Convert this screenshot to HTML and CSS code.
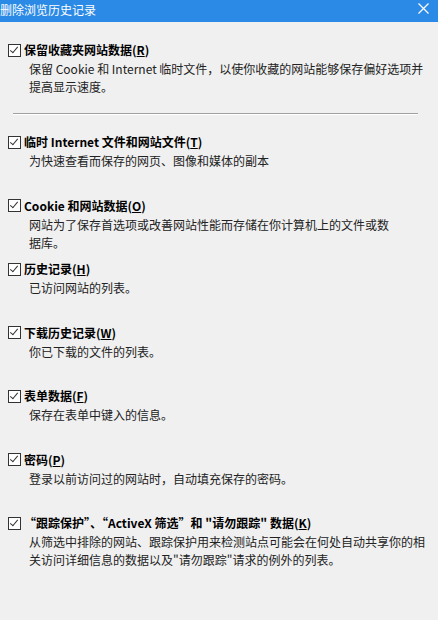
FILE: index.html
```html
<!DOCTYPE html>
<html lang="zh-CN">
  <head>
    <meta charset="UTF-8" />
    <meta name="viewport" content="width=device-width, initial-scale=1.0" />
    <title>删除浏览历史记录</title>
    <link rel="stylesheet" href="styles.css">
  </head>
  <body>
    <div class="titlebar">
      <span class="title">删除浏览历史记录</span>
      <span class="close">
        <svg width="11" height="11" viewBox="0 0 11 11">
          <path d="M0.5 0.5 L10.5 10.5 M10.5 0.5 L0.5 10.5" stroke="#fff" stroke-width="1.2" fill="none" />
        </svg>
      </span>
    </div>
    <div class="panel">
      <div class="item first">
        <label class="row"><span class="box"></span><span class="label">保留收藏夹网站数据(<u>R</u>)</span></label>
        <p class="desc">保留 Cookie 和 Internet 临时文件，以使你收藏的网站能够保存偏好选项并<br>提高显示速度。</p>
      </div>
      <div class="sep"></div>
      <div class="item">
        <label class="row"><span class="box"></span><span class="label">临时 Internet 文件和网站文件(<u>T</u>)</span></label>
        <p class="desc">为快速查看而保存的网页、图像和媒体的副本</p>
      </div>
      <div class="item">
        <label class="row"><span class="box"></span><span class="label">Cookie 和网站数据(<u>O</u>)</span></label>
        <p class="desc">网站为了保存首选项或改善网站性能而存储在你计算机上的文件或数<br>据库。</p>
      </div>
      <div class="item">
        <label class="row"><span class="box"></span><span class="label">历史记录(<u>H</u>)</span></label>
        <p class="desc">已访问网站的列表。</p>
      </div>
      <div class="item">
        <label class="row"><span class="box"></span><span class="label">下载历史记录(<u>W</u>)</span></label>
        <p class="desc">你已下载的文件的列表。</p>
      </div>
      <div class="item">
        <label class="row"><span class="box"></span><span class="label">表单数据(<u>F</u>)</span></label>
        <p class="desc">保存在表单中键入的信息。</p>
      </div>
      <div class="item">
        <label class="row"><span class="box"></span><span class="label">密码(<u>P</u>)</span></label>
        <p class="desc">登录以前访问过的网站时，自动填充保存的密码。</p>
      </div>
      <div class="item">
        <label class="row"><span class="box"></span><span class="label">“跟踪保护”、“ActiveX 筛选”和 "请勿跟踪" 数据(<u>K</u>)</span></label>
        <p class="desc">从筛选中排除的网站、跟踪保护用来检测站点可能会在何处自动共享你的相<br>关访问详细信息的数据以及"请勿跟踪"请求的例外的列表。</p>
      </div>
    </div>
  </body>
</html>
```

FILE: styles.css
```css
* {
  margin: 0;
  padding: 0;
  box-sizing: border-box;
}
body {
  width: 438px;
  height: 620px;
  overflow: hidden;
  background: #f0f0f0;
  font-family: "Noto Sans CJK SC", "Noto Sans", sans-serif;
  font-size: 12px;
  color: #1a1a1a;
}
.titlebar {
  display: flex;
  align-items: center;
  justify-content: space-between;
  height: 22px;
  background: #2b8ae6;
  color: #fff;
  overflow: hidden;
}
.title {
  margin-left: 0;
  margin-top: -3px;
  font-size: 12px;
  line-height: 18px;
}
.close {
  display: flex;
  margin-right: 9px;
  margin-top: -6px;
}
.panel {
  padding: 19px 0 0 8px;
}
.item {
  height: 63.5px;
}
.item.first {
  height: auto;
}
.row {
  display: flex;
  align-items: center;
  height: 18px;
}
.box {
  position: relative;
  width: 13px;
  height: 13px;
  margin-right: 3px;
  border: 1px solid #333;
  background: #fff;
  flex: none;
}
.box::after {
  content: "";
  position: absolute;
  left: 3px;
  top: 0px;
  width: 3px;
  height: 7px;
  border-right: 1px solid #333;
  border-bottom: 1px solid #333;
  transform: rotate(40deg);
}
.label {
  font-weight: bold;
  color: #000;
  line-height: 18px;
  white-space: nowrap;
}
.desc {
  margin-top: 1px;
  padding-left: 21px;
  line-height: 18px;
  white-space: nowrap;
  color: #222;
}
.sep {
  width: 405px;
  height: 2px;
  margin: 17px 0 18px 5px;
  border-top: 1px solid #a0a0a0;
  border-bottom: 1px solid #fff;
}
```
